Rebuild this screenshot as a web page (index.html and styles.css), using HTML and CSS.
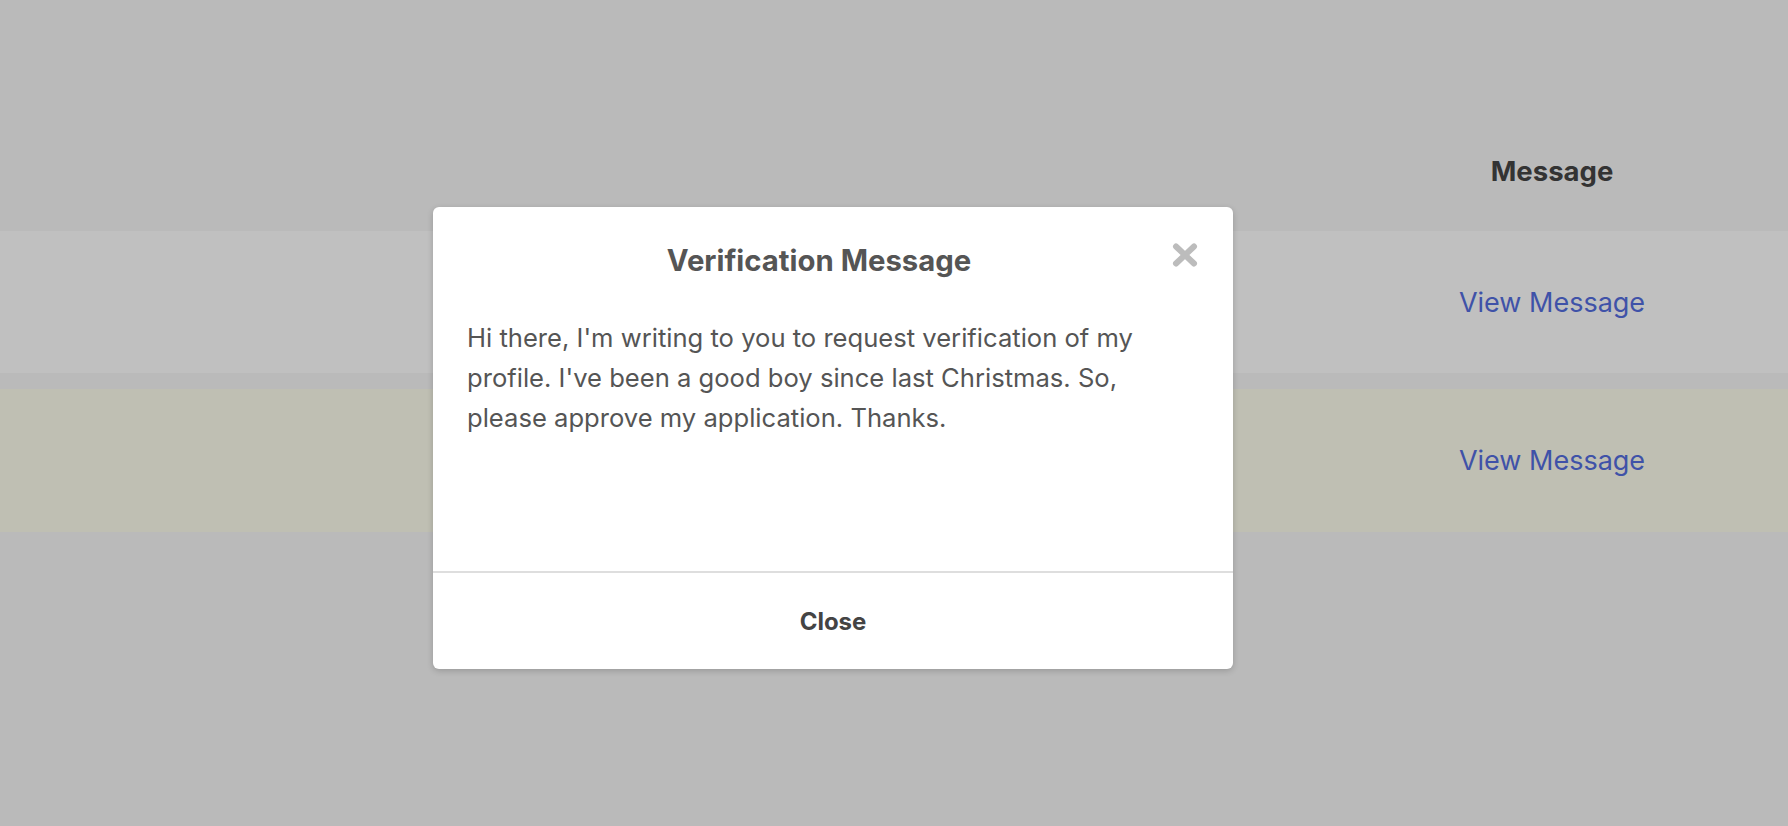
FILE: index.html
```html
<!DOCTYPE html>
<html lang="en">
<head>
<meta charset="utf-8">
<title>Verification Message</title>
<link rel="stylesheet" href="styles.css">
</head>
<body>
<div class="page">
  <div class="table">
    <div class="thead">
      <div class="cell-spacer"></div>
      <div class="th">Message</div>
    </div>
    <div class="row row-plain">
      <div class="cell-spacer"></div>
      <div class="td"><a class="link" href="#">View Message</a></div>
    </div>
    <div class="row row-highlight">
      <div class="cell-spacer"></div>
      <div class="td"><a class="link" href="#">View Message</a></div>
    </div>
  </div>
</div>
<div class="overlay">
  <div class="modal">
    <div class="modal-header">
      <h2 class="modal-title">Verification Message</h2>
      <button class="modal-x" aria-label="Close">
        <svg width="26" height="24" viewBox="0 0 26 24"><path d="M4 3.5 L22 20.5 M22 3.5 L4 20.5" stroke="#bcbcbc" stroke-width="6" stroke-linecap="round" fill="none"/></svg>
      </button>
    </div>
    <div class="modal-body">
      <p class="modal-text">Hi there, I'm writing to you to request verification of my profile. I've been a good boy since last Christmas. So, please approve my application. Thanks.</p>
    </div>
    <div class="modal-footer">
      <button class="close-btn">Close</button>
    </div>
  </div>
</div>
</body>
</html>
```
FILE: styles.css
```css
* { box-sizing: border-box; }
html, body { margin: 0; padding: 0; }
body {
  background: #bababa;
  font-family: Inter, "Noto Sans", "Liberation Sans", sans-serif;
  width: 1788px;
  height: 826px;
  overflow: hidden;
  position: relative;
}
.page { padding-top: 111px; }
.table { display: flex; flex-direction: column; }
.thead, .row { display: grid; grid-template-columns: 1fr 472px; }
.thead { height: 120px; align-items: center; }
.th {
  text-align: center;
  font-weight: 700;
  font-size: 27.5px;
  color: #333;
}
.row { height: 142px; align-items: center; }
.row-plain { background: #c0c0c0; }
.row-highlight { background: #bfbfb3; margin-top: 16px; height: 143px; }
.td { text-align: center; }
.link {
  color: #3f52a8;
  text-decoration: none;
  font-size: 27px;
}
.overlay {
  position: absolute;
  left: 433px;
  top: 207px;
}
.modal {
  width: 800px;
  height: 462px;
  background: #fff;
  border-radius: 6px;
  box-shadow: 0 2px 6px rgba(0,0,0,0.18);
  display: flex;
  flex-direction: column;
}
.modal-header {
  position: relative;
  padding: 36px 34px 0;
  height: 72px;
}
.modal-title {
  margin: 0;
  text-align: center;
  font-size: 29.3px;
  line-height: 36px;
  font-weight: 700;
  color: #555;
  padding-right: 28px;
}
.modal-x {
  position: absolute;
  right: 35px;
  top: 36px;
  width: 26px;
  height: 24px;
  padding: 0;
  border: 0;
  background: none;
  display: block;
}
.modal-x svg { display: block; }
.modal-body {
  height: 294px;
  padding: 39px 44px 0 34px;
  border-bottom: 2px solid #dedede;
}
.modal-text {
  margin: 0;
  font-size: 25.6px;
  line-height: 40px;
  color: #555;
}
.modal-footer {
  flex: 1;
  display: flex;
  align-items: center;
  justify-content: center;
}
.close-btn {
  border: 0;
  background: none;
  font-family: Inter, "Liberation Sans", sans-serif;
  font-size: 24px;
  font-weight: 700;
  color: #444;
  padding: 0;
}
```
